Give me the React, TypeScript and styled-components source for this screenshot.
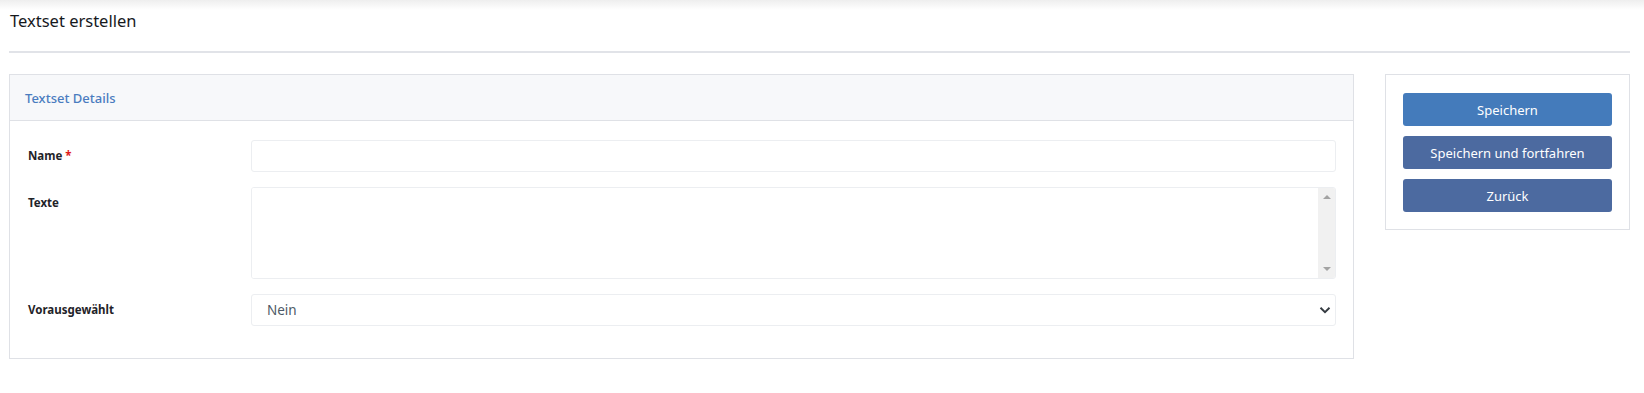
import React from "react";
import styled, { createGlobalStyle } from "styled-components";

const GlobalStyle = createGlobalStyle`
    html, body {
        margin: 0;
        padding: 0;
        background: #ffffff;
        font-family: "Noto Sans", "Open Sans", Arial, sans-serif;
        color: #212529;
    }
`

const Page = styled.div`
    position: relative;
    padding: 0 14px 0 9px;

    &::before {
        content: "";
        position: absolute;
        left: 0;
        right: 0;
        top: 0;
        height: 10px;
        background: linear-gradient(to bottom, #eeeeee, rgba(255, 255, 255, 0));
    }
`

const PageHeader = styled.div`
    height: 51px;
    border-bottom: 2px solid #e1e3e8;
    display: flex;
    align-items: flex-start;
`

const Title = styled.h1`
    margin: 9px 0 0 1px;
    font-size: 16.5px;
    font-weight: 400;
    color: #16191d;
`

const Layout = styled.div`
    display: grid;
    grid-template-columns: 1345px 245px;
    column-gap: 31px;
    align-items: start;
    margin-top: 21px;
`

const Card = styled.div`
    border: 1px solid #dfe1e6;
    background: #ffffff;
`

const CardHeader = styled.div`
    height: 45px;
    background: #f7f8fa;
    border-bottom: 1px solid #dfe1e6;
    display: flex;
    align-items: center;
    padding-left: 15px;
    font-size: 13px;
    font-weight: 500;
    color: #4a7cbf;
`

const CardBody = styled.div`
    padding: 19px 17px 32px 18px;
    display: flex;
    flex-direction: column;
    gap: 15px;
`

const FormRow = styled.div`
    display: grid;
    grid-template-columns: 223px 1fr;
    align-items: start;
`

const Label = styled.label`
    font-size: 11.5px;
    font-weight: 700;
    color: #1f2329;
    padding-top: 8px;
`

const Required = styled.span`
    color: #e01919;
    margin-left: 3px;
`

const TextInput = styled.input`
    box-sizing: border-box;
    width: 100%;
    height: 32px;
    border: 1px solid #eceef1;
    border-radius: 3px;
    background: #ffffff;
    padding: 0 15px;
    font-family: inherit;
    font-size: 14px;
    outline: none;
`

const TextAreaBox = styled.div`
    box-sizing: border-box;
    height: 92px;
    border: 1px solid #eceef1;
    border-radius: 3px;
    background: #ffffff;
    display: flex;
    overflow: hidden;
`

const TextArea = styled.textarea`
    flex: 1;
    border: none;
    resize: none;
    outline: none;
    padding: 6px 15px;
    font-family: inherit;
    font-size: 14px;
    overflow: hidden;
`

const ScrollTrack = styled.div`
    width: 17px;
    background: #f1f1f1;
    display: flex;
    flex-direction: column;
    justify-content: space-between;
    align-items: center;
    padding: 7px 0;
`

const Arrow = styled.div<{ $up?: boolean }>`
    width: 0;
    height: 0;
    border-left: 4px solid transparent;
    border-right: 4px solid transparent;
    ${(p) => p.$up
        ? "border-bottom: 4px solid #a3a3a3;"
        : "border-top: 4px solid #a3a3a3;"}
`

const SelectBox = styled.div`
    box-sizing: border-box;
    height: 32px;
    border: 1px solid #eceef1;
    border-radius: 3px;
    background: #ffffff;
    display: flex;
    align-items: center;
    justify-content: space-between;
    padding: 0 4px 0 15px;
    font-size: 13.5px;
    color: #4d5966;
`

const SidePanel = styled.div`
    border: 1px solid #dfe1e6;
    padding: 18px 17px 17px 17px;
    display: flex;
    flex-direction: column;
    gap: 10px;
`

const Button = styled.button<{ $primary?: boolean }>`
    height: 33px;
    border: none;
    border-radius: 3px;
    background: ${(p) => (p.$primary ? "#447bbb" : "#4c6aa0")};
    color: #ffffff;
    font-family: inherit;
    font-size: 13px;
    cursor: pointer;
`

export default function App() {
    return (
        <>
            <GlobalStyle />
            <Page>
                <PageHeader>
                    <Title>Textset erstellen</Title>
                </PageHeader>
                <Layout>
                    <Card>
                        <CardHeader>Textset Details</CardHeader>
                        <CardBody>
                            <FormRow>
                                <Label>Name<Required>*</Required></Label>
                                <TextInput type="text" />
                            </FormRow>
                            <FormRow>
                                <Label>Texte</Label>
                                <TextAreaBox>
                                    <TextArea />
                                    <ScrollTrack>
                                        <Arrow $up />
                                        <Arrow />
                                    </ScrollTrack>
                                </TextAreaBox>
                            </FormRow>
                            <FormRow>
                                <Label>Vorausgewählt</Label>
                                <SelectBox>
                                    <span>Nein</span>
                                    <svg width="12" height="12" viewBox="0 0 16 16">
                                        <path d="M2 5l6 6 6-6" fill="none" stroke="#343a40" strokeWidth="2.5" />
                                    </svg>
                                </SelectBox>
                            </FormRow>
                        </CardBody>
                    </Card>
                    <SidePanel>
                        <Button $primary>Speichern</Button>
                        <Button>Speichern und fortfahren</Button>
                        <Button>Zurück</Button>
                    </SidePanel>
                </Layout>
            </Page>
        </>
    );
}
